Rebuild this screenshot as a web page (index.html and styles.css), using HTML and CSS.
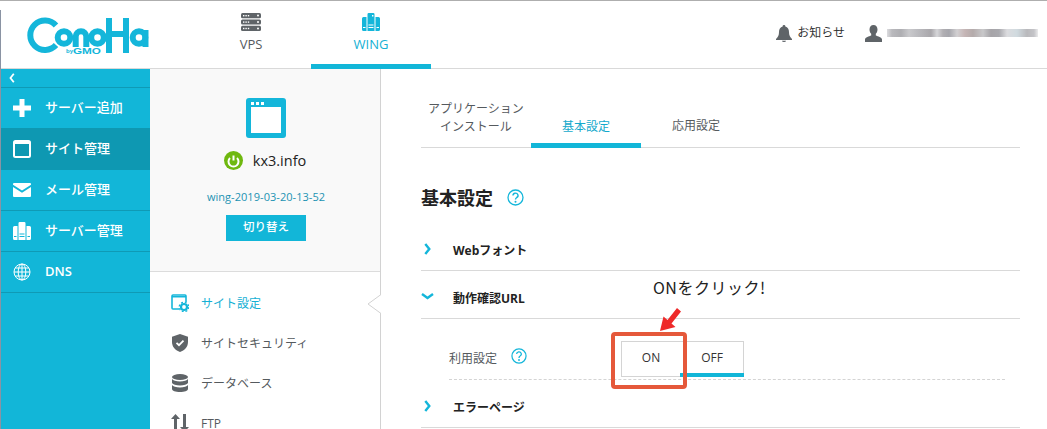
FILE: index.html
```html
<!DOCTYPE html>
<html lang="ja">
<head>
<meta charset="utf-8">
<title>ConoHa WING</title>
<link rel="stylesheet" href="styles.css">
</head>
<body>
<div class="page">
  <header class="topbar">
    <a class="logo" aria-label="ConoHa by GMO">
      <svg width="150" height="68" viewBox="0 0 150 68">
        <g fill="none" stroke="#14b6da" stroke-width="6">
          <path d="M56 24.500 A14.700 14.700 0 1 0 56 44"/>
          <circle cx="64" cy="36.500" r="6.300"/>
          <path d="M75.700 46V35.500a5.300 5.300 0 0 1 10.600 0V46"/>
          <circle cx="97.500" cy="36.500" r="6.300"/>
          <path d="M109 17V52M126 17V52M109 33H126"/>
          <circle cx="139" cy="36.500" r="6.300"/>
          <path d="M145.500 29V46"/>
        </g>
        <text x="66" y="52" class="logo-by">by</text>
        <text x="73" y="52.500" class="logo-gmo" textLength="28" lengthAdjust="spacingAndGlyphs">GMO</text>
      </svg>
    </a>
    <nav class="topnav">
      <a class="topnav-item">
        <svg width="20" height="18" viewBox="0 0 20 18">
          <g fill="#5f6468"><rect y="0" width="20" height="5.200" rx="1.500"/><rect y="6.400" width="20" height="5.200" rx="1.500"/><rect y="12.800" width="20" height="5.200" rx="1.500"/></g>
          <g fill="#fff"><rect x="2" y="2" width="1.400" height="1.400"/><rect x="4.400" y="2" width="1.400" height="1.400"/><rect x="6.800" y="2" width="1.400" height="1.400"/><circle cx="17" cy="2.600" r="1"/><rect x="2" y="8.400" width="1.400" height="1.400"/><rect x="4.400" y="8.400" width="1.400" height="1.400"/><rect x="6.800" y="8.400" width="1.400" height="1.400"/><circle cx="17" cy="9" r="1"/><rect x="2" y="14.800" width="1.400" height="1.400"/><rect x="4.400" y="14.800" width="1.400" height="1.400"/><rect x="6.800" y="14.800" width="1.400" height="1.400"/><circle cx="17" cy="15.400" r="1"/></g>
        </svg>
        <span>VPS</span>
      </a>
      <a class="topnav-item is-active">
        <svg width="18" height="18" viewBox="0 0 18 18">
          <path fill="#14b6da" d="M5.500 1.200A1.200 1.200 0 0 1 6.700 0h4.600a1.200 1.200 0 0 1 1.200 1.200V18h-7zM0 5.500A1.500 1.500 0 0 1 1.500 4H4.500v14H1.500A1.500 1.500 0 0 1 0 16.500zM13.500 4h3A1.500 1.500 0 0 1 18 5.500v11a1.500 1.500 0 0 1-1.500 1.500h-3z"/>
          <path fill="#fff" d="M10 2h1.400v1.400H10zM6.500 11.500h5v1h-5zM6.500 14h5v1h-5zM1 14h2.500v1H1zM14.500 14H17v1h-2.500z"/>
        </svg>
        <span>WING</span>
      </a>
    </nav>
    <div class="account">
      <svg class="bell" width="16" height="17" viewBox="0 0 16 17"><path fill="#5f6468" d="M8 0a1.300 1.300 0 0 1 1.300 1.500C11.800 2.200 13 4.300 13 7c0 3.500 1 5 3 7v1H0v-1c2-2 3-3.500 3-7 0-2.700 1.200-4.800 3.700-5.500A1.300 1.300 0 0 1 8 0zM6 15.700h4A2 1.300 0 0 1 6 15.700z"/></svg>
      <span class="notice">お知らせ</span>
      <svg class="user" width="17" height="17" viewBox="0 0 17 17"><path fill="#5f6468" d="M8.500 0c2.500 0 4 1.800 4 4.500 0 1.800-.7 3.300-1.700 4.300v1.700c2 .8 6.200 1.800 6.200 4V17H0v-2.500c0-2.200 4.200-3.200 6.200-4V8.800c-1-1-1.700-2.500-1.700-4.300C4.500 1.800 6 0 8.500 0z"/></svg>
      <span class="blurred" aria-hidden="true"></span>
    </div>
  </header>

  <div class="layout">
    <aside class="sidebar">
      <div class="collapse"><svg width="6" height="10" viewBox="0 0 6 10"><path d="M4.800 .8 1.500 5l3.300 4.200" fill="none" stroke="#fff" stroke-width="1.800"/></svg></div>
      <a class="side-item">
        <svg width="18" height="18" viewBox="0 0 18 18"><path fill="#fff" d="M6.500 0h5v6.500H18v5h-6.500V18h-5v-6.500H0v-5h6.500z"/></svg>
        <span>サーバー追加</span>
      </a>
      <a class="side-item is-active">
        <svg width="18" height="18" viewBox="0 0 18 18"><rect x="1" y="1" width="16" height="16" rx="1.500" fill="none" stroke="#fff" stroke-width="2"/><rect x="1" y="1" width="16" height="3" fill="#fff"/></svg>
        <span>サイト管理</span>
      </a>
      <a class="side-item">
        <svg width="18" height="14" viewBox="0 0 18 14"><path fill="#fff" d="M1 0h16a1 1 0 0 1 1 1v.8L9 7.500 0 1.800V1a1 1 0 0 1 1-1zM0 4l9 5.800L18 4v9a1 1 0 0 1-1 1H1a1 1 0 0 1-1-1z"/></svg>
        <span>メール管理</span>
      </a>
      <a class="side-item">
        <svg width="18" height="18" viewBox="0 0 18 18">
          <path fill="#fff" d="M5.500 1.200A1.200 1.200 0 0 1 6.700 0h4.600a1.200 1.200 0 0 1 1.200 1.200V18h-7zM0 5.500A1.500 1.500 0 0 1 1.500 4H4.500v14H1.500A1.500 1.500 0 0 1 0 16.500zM13.500 4h3A1.500 1.500 0 0 1 18 5.500v11a1.500 1.500 0 0 1-1.500 1.500h-3z"/>
          <path fill="#12b6d8" d="M6.500 11.500h5v1h-5zM6.500 14h5v1h-5zM1 14h2.500v1H1zM14.500 14H17v1h-2.500z"/>
        </svg>
        <span>サーバー管理</span>
      </a>
      <a class="side-item">
        <svg width="18" height="18" viewBox="0 0 18 18"><g fill="none" stroke="#fff" stroke-width="1"><circle cx="9" cy="9" r="8"/><ellipse cx="9" cy="9" rx="3.800" ry="8"/><path d="M9 1v16M1 9h16M2.200 5h13.600M2.200 13h13.600"/></g></svg>
        <span class="latin">DNS</span>
      </a>
    </aside>

    <section class="panel">
      <div class="site-card">
        <svg class="site-icon" width="40" height="40" viewBox="0 0 40 40"><rect width="40" height="40" rx="3" fill="#14b6da"/><rect x="5" y="9" width="30" height="26" fill="#fff"/><g fill="#fff"><rect x="5" y="4" width="3" height="3"/><rect x="10" y="4" width="3" height="3"/><rect x="15" y="4" width="3" height="3"/></g></svg>
        <div class="site-name">
          <svg width="19" height="19" viewBox="0 0 19 19"><circle cx="9.500" cy="9.500" r="9.500" fill="#6fb80f"/><path d="M6 7a5 5 0 1 0 7 0" fill="none" stroke="#fff" stroke-width="2"/><path d="M9.500 4.500v5" stroke="#fff" stroke-width="2"/></svg>
          <span>kx3.info</span>
        </div>
        <p class="site-id">wing-2019-03-20-13-52</p>
        <a class="switch-btn">切り替え</a>
      </div>
      <ul class="panel-menu">
        <li class="panel-item is-current">
          <svg width="18" height="18" viewBox="0 0 18 18"><path d="M8 15H2a1 1 0 0 1-1-1V2a1 1 0 0 1 1-1h12a1 1 0 0 1 1 1v6" fill="none" stroke="#14b6da" stroke-width="1.600"/><path d="M1 2h14v1.500H1z" fill="#14b6da"/><circle cx="13" cy="13" r="3" fill="none" stroke="#14b6da" stroke-width="2.200"/><circle cx="13" cy="13" r="4.800" fill="none" stroke="#14b6da" stroke-width="1.200" stroke-dasharray="2 1.800"/></svg>
          <span>サイト設定</span>
        </li>
        <li class="panel-item">
          <svg width="18" height="18" viewBox="0 0 18 18"><path fill="#5f6468" d="M9 0l8 2.800V8c0 4.800-3.500 8.500-8 10-4.500-1.500-8-5.200-8-10V2.800z"/><path d="M5.500 8.800 8 11.200l4.500-4.500" fill="none" stroke="#fff" stroke-width="1.800"/></svg>
          <span>サイトセキュリティ</span>
        </li>
        <li class="panel-item">
          <svg width="18" height="18" viewBox="0 0 18 18"><g fill="#5f6468"><ellipse cx="9" cy="3" rx="8" ry="3"/><path d="M1 5c1 1.600 4 2.500 8 2.500S16 6.600 17 5v4c-1 1.600-4 2.500-8 2.500S2 10.600 1 9z"/><path d="M1 11c1 1.600 4 2.500 8 2.500s7-.9 8-2.500v4c0 1.700-3.600 3-8 3s-8-1.300-8-3z"/></g></svg>
          <span>データベース</span>
        </li>
        <li class="panel-item">
          <svg width="18" height="18" viewBox="0 0 18 18"><g fill="#5f6468"><path d="M4.500 0 9 5H6v13H3V5H0z"/><path d="M13.500 18 18 13h-3V0h-3v13H9z"/></g></svg>
          <span class="latin-light">FTP</span>
        </li>
      </ul>
      <svg class="panel-notch" width="14" height="20" viewBox="0 0 14 20"><path d="M14 .5 1 10l13 9.500z" fill="#fff"/><path d="M14 .5 1 10l13 9.500" fill="none" stroke="#d2d2d2"/></svg>
    </section>

    <main class="content">
      <div class="tabs">
        <a class="tab tab-wrap">アプリケーション<br>インストール</a>
        <a class="tab is-active">基本設定</a>
        <a class="tab">応用設定</a>
      </div>
      <h1 class="title">基本設定
        <svg width="17" height="17" viewBox="0 0 17 17"><circle cx="8.500" cy="8.500" r="7.500" fill="none" stroke="#14b6da" stroke-width="1.300"/><path d="M6 6.500a2.500 2.300 0 1 1 3.700 2c-.8.500-1.200.9-1.200 2" fill="none" stroke="#14b6da" stroke-width="1.400"/><circle cx="8.500" cy="12.700" r="1" fill="#14b6da"/></svg>
      </h1>
      <div class="acc-row">
        <svg width="7" height="12" viewBox="0 0 7 12"><path d="M1.300 1 5.300 6l-4 5" fill="none" stroke="#14b6da" stroke-width="2.400"/></svg>
        <span>Webフォント</span>
      </div>
      <div class="acc-row is-open">
        <svg width="13" height="7" viewBox="0 0 13 7"><path d="M1 1l5.500 4L12 1" fill="none" stroke="#14b6da" stroke-width="2.400"/></svg>
        <span>動作確認URL</span>
      </div>
      <div class="setting">
        <span class="setting-label">利用設定</span>
        <svg class="setting-help" width="16" height="16" viewBox="0 0 17 17"><circle cx="8.500" cy="8.500" r="7.500" fill="none" stroke="#14b6da" stroke-width="1.300"/><path d="M6 6.500a2.500 2.300 0 1 1 3.700 2c-.8.500-1.200.9-1.200 2" fill="none" stroke="#14b6da" stroke-width="1.400"/><circle cx="8.500" cy="12.700" r="1" fill="#14b6da"/></svg>
        <div class="toggle">
          <span class="toggle-opt">ON</span>
          <span class="toggle-opt is-off">OFF</span>
        </div>
      </div>
      <div class="acc-row">
        <svg width="7" height="12" viewBox="0 0 7 12"><path d="M1.300 1 5.300 6l-4 5" fill="none" stroke="#14b6da" stroke-width="2.400"/></svg>
        <span>エラーページ</span>
      </div>
    </main>
  </div>

  <div class="note">ONをクリック!</div>
  <svg class="note-arrow" width="22" height="24" viewBox="0 0 22 24"><path fill="#ee2a2a" d="M0 24 3.500 9.500 7.500 13 17 1l4 3.500L11.500 16.500l4 3.500z"/></svg>
  <div class="note-box"></div>
</div>
</body>
</html>
```
FILE: styles.css
```css
* { box-sizing: border-box; }
html, body { margin: 0; padding: 0; }
body {
  font-family: "Open Sans", "Noto Sans CJK JP", sans-serif;
  color: #333;
  background: #fff;
  font-size: 12px;
}
a { color: inherit; text-decoration: none; }
ul { list-style: none; margin: 0; padding: 0; }
p, h1 { margin: 0; }

.page {
  position: relative;
  width: 1047px;
  height: 429px;
  overflow: hidden;
  border-top: 1px solid #aeaeae;
}
.page::before {
  content: "";
  position: absolute;
  left: 0;
  top: 9px;
  bottom: 0;
  width: 1px;
  background: #8a93a3;
  z-index: 2;
}

/* top bar */
.topbar {
  display: flex;
  height: 68px;
  border-bottom: 1px solid #d9d9d9;
}
.logo { display: block; width: 191px; height: 67px; flex: none; }
.logo-by { font: 700 6px "Liberation Sans", sans-serif; fill: #14b6da; }
.logo-gmo { font: 700 8.500px "Liberation Sans", sans-serif; fill: #14b6da; }
.topnav { display: flex; }
.topnav-item {
  width: 120px;
  height: 68px;
  padding-top: 12px;
  display: flex;
  flex-direction: column;
  align-items: center;
  gap: 4px;
  font-size: 13px;
  line-height: 18px;
  color: #555a5e;
}
.topnav-item.is-active {
  color: #14b0d4;
  border-bottom: 5px solid #12b6d8;
}
.account {
  margin-left: auto;
  display: flex;
  align-items: center;
  height: 64px;
  padding-right: 9px;
}
.notice { margin-left: 5px; font-size: 12px; color: #333; margin-top: -2px; }
.user { margin-left: 20px; }
.blurred {
  margin-left: 5px;
  width: 151px;
  height: 8px;
  filter: blur(.6px);
  background: linear-gradient(90deg,
    #dcdcdf 0, #b9b9bd 5px, #aeaeb2 14px, #c9c9cc 22px, #bcbcc0 30px, #a9a7ab 44px,
    #d6d6d9 50px, #b1afb3 56px, #a6a6ac 62px, #d2d0d2 70px, #c5b5b5 78px, #b4abab 86px,
    #c8c8ca 96px, #a6a4a8 104px, #a9a9ae 112px, #dcdcdf 120px, #d0dadf 130px,
    #b9b9bc 140px, #c4c4c8 147px, #ebebec 151px);
}

/* body columns */
.layout { display: flex; height: 360px; }

.sidebar {
  width: 150px;
  flex: none;
  background: #12b6d8;
  color: #fff;
}
.collapse {
  height: 19px;
  padding: 4px 0 0 9px;
  border-bottom: 1px solid #0f9ab5;
}
.collapse svg { display: block; }
.side-item {
  display: flex;
  align-items: center;
  height: 41px;
  border-bottom: 1px solid #0f9ab5;
  font-size: 13px;
  font-weight: 500;
  position: relative;
}
.side-item svg { flex: none; margin-left: 13px; }
.side-item span { position: absolute; left: 45px; margin-top: -4px; }
.side-item .latin { margin-top: -2px; }
.side-item:nth-child(2) { height: 40px; border-bottom: 0; }
.side-item.is-active { height: 42px; background: #0e98b2; border-bottom: 0; }
.latin { font-family: "Open Sans", sans-serif; font-weight: 600; }

.panel {
  position: relative;
  width: 231px;
  flex: none;
  border-right: 1px solid #d2d2d2;
}
.site-card {
  height: 203px;
  background: #f9f9f9;
  border-bottom: 1px solid #dcdcdc;
  padding: 29px 0 0 2px;
  display: flex;
  flex-direction: column;
  align-items: center;
}
.site-icon { display: block; }
.site-name {
  margin: 13px 0 0 -2px;
  display: flex;
  align-items: center;
  gap: 10px;
  height: 19px;
  font-size: 14.500px;
  color: #222;
}
.site-name svg { display: block; }
.site-id { margin-top: 19px; font-size: 11px; letter-spacing: .05px; line-height: 16px; color: #1c93b3; }
.switch-btn {
  margin-top: 10px;
  width: 80px;
  height: 26px;
  line-height: 24px;
  text-align: center;
  background: #12b6d8;
  color: #fff;
  font-weight: 500;
  font-size: 11.500px;
}
.panel-menu { padding-top: 11px; }
.panel-item {
  display: flex;
  align-items: center;
  gap: 12px;
  height: 40px;
  padding-left: 21px;
  color: #555a5e;
  font-size: 12px;
}
.panel-item svg { display: block; flex: none; }
.panel-item.is-current { color: #14b0d4; }
.latin-light { font-family: "Open Sans", sans-serif; }
.panel-notch {
  position: absolute;
  right: -1px;
  top: 225px;
}

.content {
  flex: none;
  width: 639px;
  padding-left: 40px;
}
.tabs {
  display: flex;
  align-items: flex-end;
  height: 79px;
  border-bottom: 1px solid #d9d9d9;
}
.tab {
  width: 110px;
  padding-bottom: 12px;
  text-align: center;
  font-size: 12px;
  line-height: 18px;
  color: #555a5e;
}
.tab-wrap { padding-bottom: 11px; }
.tab.is-active {
  padding-bottom: 7px;
  margin-bottom: -1px;
  border-bottom: 5px solid #12b6d8;
  color: #14a9cc;
}
.title {
  display: flex;
  align-items: center;
  gap: 14px;
  height: 75px;
  padding-top: 23px;
  font-size: 18px;
  font-weight: 700;
  color: #222;
}
.title svg { display: block; }
.acc-row {
  display: flex;
  align-items: center;
  position: relative;
  height: 48px;
  padding: 4px 0 0 3px;
  border-bottom: 1px solid #d9d9d9;
  font-size: 12px;
  font-weight: 700;
  color: #222;
}
.acc-row.is-open { padding-left: 0; }
.acc-row svg { display: block; flex: none; }
.acc-row span { position: absolute; left: 32px; margin-top: 2px; }
.setting {
  display: flex;
  align-items: center;
  height: 61px;
  margin: 0 15px 0 28px;
  border-bottom: 1px dashed #d4d4d4;
}
.setting-label { width: 48px; color: #555a5e; margin-top: 18px; }
.setting-help { margin: 13px 0 0 14px; flex: none; }
.toggle { display: flex; margin: 20px 0 0 94px; height: 36px; border: 1px solid #d4d4d4; width: 123px; color: #333; }
.toggle-opt {
  display: flex;
  align-items: center;
  justify-content: center;
  width: 58px;
  height: 34px;
  padding-bottom: 3px;
}
.toggle-opt.is-off { width: 64px; margin-right: -1px; border-bottom: 4px solid #12b6d8; height: 35px; padding-bottom: 0; }

/* annotations drawn over the screenshot */
.note {
  position: absolute;
  left: 653px;
  top: 276px;
  font-family: "Noto Sans CJK JP", sans-serif;
  font-weight: 400;
  font-size: 16px;
  line-height: 20px;
  color: #222;
  letter-spacing: .5px;
}
.note-arrow { position: absolute; left: 660px; top: 306px; }
.note-box {
  position: absolute;
  left: 611px;
  top: 331px;
  width: 76px;
  height: 57px;
  border: 4px solid #e5583a;
  border-radius: 4px;
}
```
